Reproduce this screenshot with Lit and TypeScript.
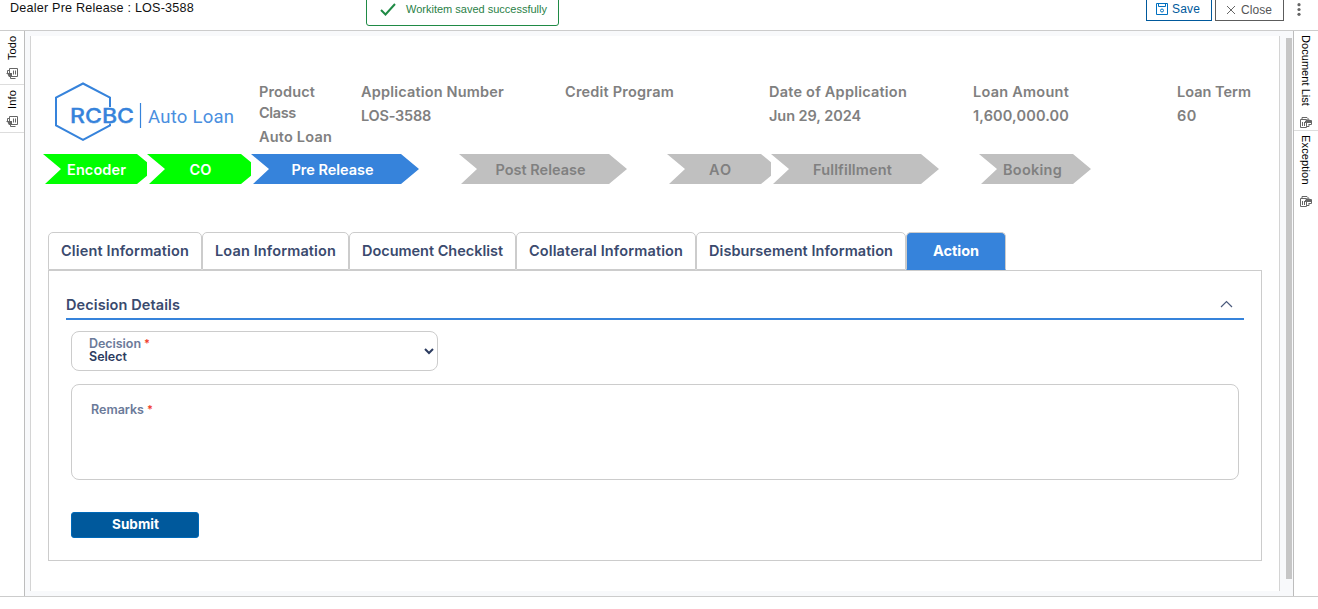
import { LitElement, html, css } from "lit";
import { customElement, property } from "lit/decorators.js";

/** One line of text whose letter spacing is tuned so that it fills a given width. */
@customElement("fit-text")
class FitText extends LitElement {
  @property() text = "";
  @property({ type: Number }) w = 0;

  static styles = css`
    :host { display: inline-block; white-space: nowrap; }
    .t { display: inline-block; white-space: pre; }
  `;

  updated() {
    const el = this.renderRoot.querySelector(".t") as HTMLElement;
    el.style.letterSpacing = "0";
    const n = el.getBoundingClientRect().width;
    el.style.letterSpacing = (this.w - n) / this.text.length + "px";
  }

  render() {
    return html`<span class="t">${this.text}</span>`;
  }
}

const panelIcon = html`<svg class="pic" width="12" height="11" viewBox="0 0 12 11" fill="none" stroke="#666">
  <path d="M3.500 5V.5h8v8h-5.500M7.500 2.500v4M9.500 2.500v4" />
  <path d="M3.500 2.500h-2v3.500M.5 5.500h3.500M4.500 9v1.500h5" />
  <path d="M1.500 6.500l1.500-1.500h3v4h-3z" fill="#666" stroke="none" />
</svg>`;

const panelIconRight = html`<svg class="pic" width="12" height="11" viewBox="0 0 12 11" fill="none" stroke="#666">
  <path d="M.5 2.500h6v8h-6zM2.500 5v4M4.500 5v4" />
  <path d="M2 2.500v-2h5l2 2M6.500 9.500h2.500v-2M9 3.500h2.500v4h-3" />
  <path d="M5 4l3-2 3 2v2h-6z" fill="#666" stroke="none" />
</svg>`;

const fields = [
  { lines: [["Product", 56], ["Class", 37]], value: ["Auto Loan", 73] },
  { lines: [["Application Number", 143]], value: ["LOS-3588", 70] },
  { lines: [["Credit Program", 109]], value: null },
  { lines: [["Date of Application", 138]], value: ["Jun 29, 2024", 92] },
  { lines: [["Loan Amount", 96]], value: ["1,600,000.00", 96] },
  { lines: [["Loan Term", 74]], value: ["60", 20] },
];

const stages: [string, number, string][] = [
  ["Encoder", 59, "short done"],
  ["CO", 22, "short done"],
  ["Pre Release", 82, "long now"],
  ["Post Release", 90, "long"],
  ["AO", 23, "short"],
  ["Fullfillment", 79, "long"],
  ["Booking", 59, "short last"],
];

const tabs: [string, number][] = [
  ["Client Information", 128],
  ["Loan Information", 121],
  ["Document Checklist", 141],
  ["Collateral Information", 154],
  ["Disbursement Information", 184],
  ["Action", 46],
];

@customElement("app-root")
class AppRoot extends LitElement {
  static styles = css`
    :host { display: block; width: 1318px; height: 609px; background: #fff; overflow: hidden;
      position: relative; font-family: "Liberation Sans", Arial, sans-serif; }
    * { box-sizing: border-box; }
    svg { display: block; flex: none; }
    .top { height: 31px; border-bottom: 1px solid #ccc; display: flex; align-items: flex-start; padding-left: 10px; }
    .title { font-size: 12.6px; line-height: 14px; color: #111; margin-top: 1px; flex: 1; }
    .btn { height: 21px; border: 1px solid #00599c; border-top: 0; display: flex; color: #00599c;
      font-size: 12px; line-height: 14px; }
    .save { width: 66px; padding: 2px 0 0 9px; gap: 4px; }
    .save svg { margin-top: 1px; }
    .close { width: 69px; margin-left: 3px; border-color: #5c5c5c; color: #555; padding: 3px 0 0 10px; gap: 5px; }
    .close svg { margin-top: 2px; }
    .dots { margin: 3px 17px 0 13px; }
    .toast { position: absolute; left: 366px; top: -8px; width: 193px; height: 34px; border: 1px solid #1f8a45;
      border-radius: 3px; background: #fff; display: flex; padding: 10px 0 0 13px; gap: 10px; color: #2a7f47;
      font-size: 11px; line-height: 12px; }
    .main { display: flex; height: 566px; border-bottom: 1px solid #ccc; }
    .side { width: 25px; border-right: 1px solid #bdbdbd; display: flex; flex-direction: column; }
    .side.r { border-right: 0; border-left: 1px solid #bdbdbd; }
    .st { display: flex; flex-direction: column; align-items: center; border-bottom: 1px solid #ddd; }
    .st.nb { border: 0; }
    .v { writing-mode: vertical-rl; font-size: 11px; line-height: 14px; color: #000; white-space: nowrap; }
    .v.up { transform: rotate(180deg); }
    .todo { height: 54px; padding-top: 6px; }
    .todo .v { height: 23px; letter-spacing: .1px; }
    .todo .pic, .info .pic { margin-top: 8px; }
    .info { height: 48px; padding-top: 6px; }
    .info .v { height: 18px; letter-spacing: .2px; }
    .info .pic { margin-top: 7px; }
    .doc { height: 100px; padding-top: 4px; }
    .doc .v { height: 82px; letter-spacing: .05px; }
    .exc { padding-top: 4px; }
    .exc .v { height: 61px; letter-spacing: .15px; }
    .work { flex: 1; background: #f8f9fb; padding: 5px 0 5px 5px; display: flex; }
    .page { width: 1250px; border: solid #d4d4d4; border-width: 0 1px; background: #fff;
      padding: 0 17px; font-family: Inter, sans-serif; font-weight: 600; }
    .thumb { width: 6px; height: 541px; background: #c6c6c6; margin: 2px 0 0 6px; }
    .head { display: flex; height: 118px; padding: 44px 0 0 5px; }
    .logo { width: 188px; }
    .fields { display: grid; grid-template-columns: 102px repeat(4, 204px) 84px; margin-left: 18px; color: #808080;
      font-size: 14.5px; line-height: 21px; }
    .fields div { display: flex; flex-direction: column; margin-top: 1px; }
    .fields .val { margin-top: 3px; }
    .flow { display: grid; grid-template-columns: 104px 104px 208px 208px 104px 208px 112px; margin-left: -5px; height: 30px; }
    .slot { overflow: hidden; }
    .arrow { height: 30px; background: #c0c0c0; color: #808080; display: flex; align-items: center;
      justify-content: center; padding: 2px 5px 0 0; font-size: 14.5px; line-height: 20px; width: 168px;
      clip-path: polygon(0 0, calc(100% - 18px) 0, 100% 50%, calc(100% - 18px) 100%, 2px 100%, 18px 50%); }
    .short .arrow { width: 112px; }
    .done .arrow { background: #0f0; color: #fff; }
    .now .arrow { background: #3683db; color: #fff; }
    .tabs { display: grid; grid-template-columns: 154px 147px 167px 180px 210px 100px; height: 38px; margin-top: 48px; }
    .tab { border: 1px solid #ccc; border-radius: 5px 5px 0 0; display: flex; align-items: center;
      justify-content: center; font-size: 14.5px; line-height: 20px; color: #3a4a6e; }
    .tab.on { background: #3683db; color: #fff; border-bottom-color: #3683db; font-weight: 700; }
    .panel { width: 1214px; height: 291px; border: 1px solid #ccc; padding: 0 17px; }
    .sec { height: 49px; border-bottom: 2px solid #3683db; display: flex; justify-content: space-between;
      padding: 24px 11px 0 0; font-size: 14.5px; line-height: 20px; color: #3a4a6e; }
    .sec svg { margin-top: 5px; }
    .box { border: 1px solid #ccc; border-radius: 8px; margin-left: 5px; font-size: 12.5px; line-height: 13px; color: #6b7a99; }
    .dec { width: 367px; height: 40px; margin-top: 11px; padding: 5px 3px 0 17px; display: flex; justify-content: space-between; }
    .dec svg { margin-top: 11px; }
    .lab { display: flex; gap: 3px; }
    .req { color: #f0402a; font-size: 11px; }
    .chosen { color: #2c3c60; }
    .rem { width: 1168px; height: 96px; margin-top: 13px; padding: 18px 19px; }
    .submit { width: 128px; height: 26px; margin: 32px 0 0 5px; border: 1px solid #0069b8; border-radius: 3px;
      background: #00599c; color: #fff; font-weight: 700; font-size: 13.5px; line-height: 23px; text-align: center; padding-left: 1px; }
  `;

  render() {
    return html`
      <div class="top">
        <div class="title"><fit-text text="Dealer Pre Release : LOS-3588" w="184"></fit-text></div>
        <div class="btn save">
          <svg width="12" height="12" viewBox="0 0 12 12" fill="none" stroke="#0070c0">
            <path d="M.5 .5h11v11h-11zM2.500 .5v3h7v-3" /><circle cx="6" cy="7.500" r="1.500" />
          </svg>
          <fit-text text="Save" w="28"></fit-text>
        </div>
        <div class="btn close">
          <svg width="10" height="10" viewBox="0 0 10 10" stroke="#666"><path d="M1 1l8 8M9 1l-8 8" /></svg>
          <fit-text text="Close" w="31"></fit-text>
        </div>
        <svg class="dots" width="4" height="13" viewBox="0 0 4 13" fill="#666">
          <circle cx="2" cy="1.700" r="1.600" /><circle cx="2" cy="6.500" r="1.600" /><circle cx="2" cy="11.300" r="1.600" />
        </svg>
      </div>
      <div class="toast">
        <svg width="16" height="13" viewBox="0 0 16 13" fill="none" stroke="#1f8a45" stroke-width="2"><path d="M1 7l4.500 4.500L15 1" /></svg>
        <fit-text text="Workitem saved successfully" w="141"></fit-text>
      </div>
      <div class="main">
        <div class="side">
          <div class="st todo"><span class="v up">Todo</span>${panelIcon}</div>
          <div class="st info"><span class="v up">Info</span>${panelIcon}</div>
        </div>
        <div class="work">
          <div class="page">
            <div class="head">
              <svg class="logo" width="188" height="64" viewBox="53 80 188 64">
                <path d="M110 107V97.500L83 83.500L56 97.500V125.500L83 139.800L110 125.500V123.500" fill="none" stroke="#3683db" stroke-width="2" />
                <text x="70" y="122.500" font-family="Inter, sans-serif" font-weight="500" font-size="19.500" fill="#3683db" stroke="#3683db" stroke-width=".3" textLength="64" lengthAdjust="spacingAndGlyphs">RCBC</text>
                <path d="M140.500 103v25" stroke="#3683db" stroke-width="1.200" />
                <text x="148" y="122.500" font-family="Roboto, sans-serif" font-weight="400" font-size="18.500" fill="#4a8fdf" textLength="86">Auto Loan</text>
              </svg>
              <div class="fields">
                ${fields.map((f) => html`<div>
                  ${f.lines.map(([t, w]) => html`<fit-text text=${t} w=${w}></fit-text>`)}
                  ${f.value ? html`<fit-text class="val" text=${f.value[0]} w=${f.value[1]}></fit-text>` : ""}
                </div>`)}
              </div>
            </div>
            <div class="flow">
              ${stages.map(([t, w, c]) => html`<div class="slot ${c}"><div class="arrow"><fit-text text=${t} w=${w}></fit-text></div></div>`)}
            </div>
            <div class="tabs">
              ${tabs.map(([t, w]) => html`<div class="tab ${t === "Action" ? "on" : ""}"><fit-text text=${t} w=${w}></fit-text></div>`)}
            </div>
            <div class="panel">
              <div class="sec">
                <fit-text text="Decision Details" w="114"></fit-text>
                <svg width="13" height="8" viewBox="0 0 13 8" fill="none" stroke="#4a5a7c" stroke-width="1.200"><path d="M1 7l5.500-5.500L12 7" /></svg>
              </div>
              <div class="box dec">
                <div>
                  <div class="lab"><fit-text text="Decision" w="52"></fit-text><span class="req">*</span></div>
                  <fit-text class="chosen" text="Select" w="38"></fit-text>
                </div>
                <svg width="10" height="7" viewBox="0 0 10 7" fill="none" stroke="#2c3c60" stroke-width="2"><path d="M1 1l4 4 4-4" /></svg>
              </div>
              <div class="box rem">
                <div class="lab"><fit-text text="Remarks" w="53"></fit-text><span class="req">*</span></div>
              </div>
              <div class="submit"><fit-text text="Submit" w="47"></fit-text></div>
            </div>
          </div>
          <div class="thumb"></div>
        </div>
        <div class="side r">
          <div class="st doc"><span class="v">Document List</span>${panelIconRight}</div>
          <div class="st nb exc"><span class="v">Exception</span>${panelIconRight}</div>
        </div>
      </div>
    `;
  }
}
